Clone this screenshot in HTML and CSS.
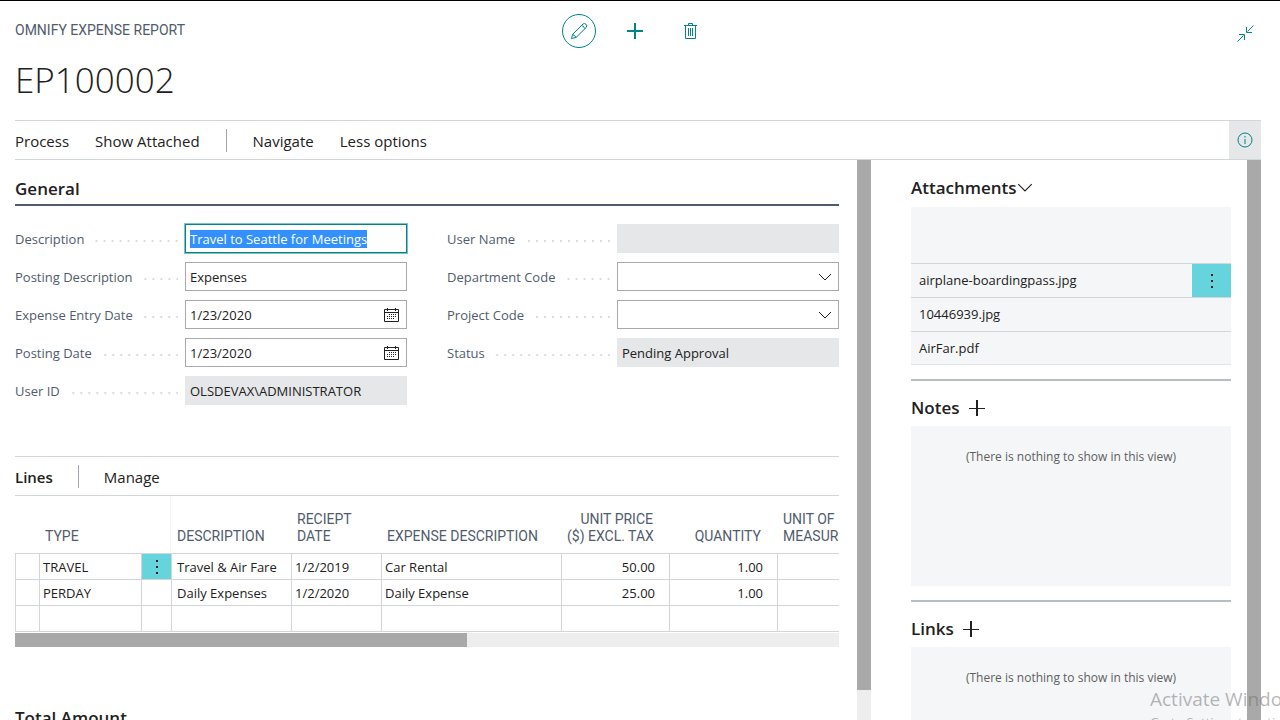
FILE: index.html
```html
<!DOCTYPE html>
<html lang="en">
<head>
<meta charset="utf-8">
<title>EP100002 - Omnify Expense Report</title>
<link rel="stylesheet" href="styles.css">
</head>
<body>
<svg class="defs" aria-hidden="true">
  <symbol id="calendar" viewBox="0 0 15 14"><path d="M.5 1.500h14v12H.5zM.5 4.500h14M3.500 0v3M11.500 0v3" fill="none" stroke="currentColor"/><path d="M5 6h1v1H5zM7 6h1v1H7zM9 6h1v1H9zM11 6h1v1h-1zM3 8h1v1H3zM5 8h1v1H5zM7 8h1v1H7zM9 8h1v1H9zM11 8h1v1h-1zM3 10h1v1H3zM5 10h1v1H5zM7 10h1v1H7zM9 10h1v1H9z" fill="currentColor"/></symbol>
  <symbol id="chevron" viewBox="0 0 14 8"><path d="M1 1l6 6 6-6" fill="none" stroke="currentColor"/></symbol>
  <symbol id="add" viewBox="0 0 16 16"><path d="M0 8.500h16" fill="none" stroke="currentColor"/><path d="M8 0v16" fill="none" stroke="currentColor" stroke-width="2"/></symbol>
  <symbol id="dots" viewBox="0 0 2 14"><path d="M0 0h2v2H0zM0 6h2v2H0zM0 12h2v2H0z" fill="currentColor"/></symbol>
</svg>
<header class="header">
  <div class="heading">
    <p class="caption">OMNIFY EXPENSE REPORT</p>
    <h1 class="title">EP100002</h1>
  </div>
  <div class="tools">
    <button class="tool tool-edit" aria-label="Edit"><svg width="18" height="18" viewBox="0 0 18 18" fill="none" stroke="currentColor"><path d="M1.500 16.500l1-4L13 2q1.500-1 3 .3t.2 3.200L6 15.500zM2.500 12.500q2.500.5 3.500 3M11.500 3.500q2.500.5 3 3"/></svg></button>
    <button class="tool" aria-label="New"><svg width="16" height="16" viewBox="0 0 16 16" fill="none" stroke="currentColor" stroke-width="2"><path d="M8 0v16M0 8h16"/></svg></button>
    <button class="tool" aria-label="Delete"><svg width="13" height="17" viewBox="0 0 13 17" fill="none" stroke="currentColor"><path d="M0 2.500h13M4.500 2V.5h4V2M1.500 3v12.500h10V3M4.500 5v8M6.500 5v8M8.500 5v8"/></svg></button>
  </div>
  <button class="tool collapse" aria-label="Collapse"><svg width="17" height="17" viewBox="0 0 17 17" fill="none" stroke="currentColor"><path d="M16.500.5l-6 6M9.500 2v5.500H15M.5 16.500l6-6M2 9.500h5.500V15"/></svg></button>
</header>
<nav class="actionbar">
  <div class="actions">
    <button class="action">Process</button>
    <button class="action">Show Attached</button>
    <span class="divider"></span>
    <button class="action">Navigate</button>
    <button class="action">Less options</button>
  </div>
  <button class="info" aria-label="Toggle details"><svg width="16" height="16" viewBox="0 0 16 16" fill="none" stroke="currentColor"><circle cx="8" cy="8" r="7"/><path d="M8 7v5M8 4v1.500" /></svg></button>
</nav>
<div class="content">
  <main class="main">
    <section class="general">
      <h2 class="section-title">General</h2>
      <div class="fields">
        <div class="column">
          <div class="field"><label class="label" for="desc">Description</label><span class="leader"></span><div class="control"><input class="box focused" id="desc" value="Travel to Seattle for Meetings"></div></div>
          <div class="field"><label class="label" for="pdesc">Posting Description</label><span class="leader"></span><div class="control"><input class="box" id="pdesc" value="Expenses"></div></div>
          <div class="field"><label class="label" for="edate">Expense Entry Date</label><span class="leader"></span><div class="control"><input class="box" id="edate" value="1/23/2020"><button class="picker" aria-label="Choose entry date"><svg width="15" height="14"><use href="#calendar"/></svg></button></div></div>
          <div class="field"><label class="label" for="pdate">Posting Date</label><span class="leader"></span><div class="control"><input class="box" id="pdate" value="1/23/2020"><button class="picker" aria-label="Choose posting date"><svg width="15" height="14"><use href="#calendar"/></svg></button></div></div>
          <div class="field"><label class="label" for="uid">User ID</label><span class="leader"></span><div class="control"><input class="box readonly" id="uid" value="OLSDEVAX\ADMINISTRATOR" readonly></div></div>
        </div>
        <div class="column">
          <div class="field"><label class="label" for="uname">User Name</label><span class="leader"></span><div class="control"><input class="box readonly" id="uname" readonly></div></div>
          <div class="field"><label class="label" for="dept">Department Code</label><span class="leader"></span><div class="control"><select class="box" id="dept"><option></option></select><svg class="arrow" width="14" height="8"><use href="#chevron"/></svg></div></div>
          <div class="field"><label class="label" for="proj">Project Code</label><span class="leader"></span><div class="control"><select class="box" id="proj"><option></option></select><svg class="arrow" width="14" height="8"><use href="#chevron"/></svg></div></div>
          <div class="field"><label class="label" for="status">Status</label><span class="leader"></span><div class="control"><input class="box readonly" id="status" value="Pending Approval" readonly></div></div>
        </div>
      </div>
    </section>
    <section class="lines">
      <div class="lines-bar">
        <h2 class="lines-title">Lines</h2>
        <span class="divider"></span>
        <button class="action">Manage</button>
      </div>
      <div class="table-wrap">
        <table class="table">
          <colgroup><col class="w-mark"><col class="w-type"><col class="w-menu"><col class="w-desc"><col class="w-date"><col class="w-exp"><col class="w-num"><col class="w-num"><col class="w-desc"></colgroup>
          <thead><tr><th></th><th>TYPE</th><th></th><th class="first">DESCRIPTION</th><th>RECIEPT<br>DATE</th><th>EXPENSE DESCRIPTION</th><th class="num">UNIT PRICE<br>($) EXCL. TAX</th><th class="num">QUANTITY</th><th>UNIT OF<br>MEASURE</th></tr></thead>
          <tbody>
            <tr><td></td><td>TRAVEL</td><td class="menu-cell"><button class="row-menu" aria-label="Row options"><svg width="2" height="14"><use href="#dots"/></svg></button></td><td class="wide">Travel &amp; Air Fare</td><td>1/2/2019</td><td>Car Rental</td><td class="num">50.00</td><td class="num">1.00</td><td></td></tr>
            <tr><td></td><td>PERDAY</td><td></td><td class="wide">Daily Expenses</td><td>1/2/2020</td><td>Daily Expense</td><td class="num">25.00</td><td class="num">1.00</td><td></td></tr>
            <tr><td></td><td></td><td></td><td></td><td></td><td></td><td></td><td></td><td></td></tr>
          </tbody>
        </table>
      </div>
      <div class="hscroll"><div class="hthumb"></div></div>
    </section>
    <h2 class="section-title total">Total Amount</h2>
  </main>
  <div class="vscroll"><div class="vthumb"></div></div>
  <aside class="side">
    <section class="part">
      <h2 class="part-title">Attachments<svg width="16" height="9" viewBox="0 0 14 8"><use href="#chevron"/></svg></h2>
      <ul class="files">
        <li class="file"><a class="file-link" href="#">airplane-boardingpass.jpg</a><button class="file-menu" aria-label="File options"><svg width="2" height="14"><use href="#dots"/></svg></button></li>
        <li class="file"><a class="file-link" href="#">10446939.jpg</a></li>
        <li class="file"><a class="file-link" href="#">AirFar.pdf</a></li>
      </ul>
    </section>
    <section class="part ruled">
      <h2 class="part-title spaced">Notes<button class="add" aria-label="Add note"><svg width="16" height="16"><use href="#add"/></svg></button></h2>
      <p class="empty">(There is nothing to show in this view)</p>
    </section>
    <section class="part ruled">
      <h2 class="part-title spaced">Links<button class="add" aria-label="Add link"><svg width="16" height="16"><use href="#add"/></svg></button></h2>
      <p class="empty">(There is nothing to show in this view)</p>
    </section>
  </aside>
  <div class="vscroll"><div class="vthumb full"></div></div>
</div>
<div class="watermark"><p class="mark-title">Activate Windows</p><p class="mark-text">Go to Settings to activate Windows.</p></div>
<script src="script.js"></script>
</body>
</html>
```
FILE: script.js
```js
const description = document.getElementById('desc');
description.focus();
description.select();
```
FILE: styles.css
```css
* { box-sizing: border-box; }
body {
  margin: 0;
  height: 100vh;
  overflow: hidden;
  display: flex;
  flex-direction: column;
  position: relative;
  border-top: 1px solid #000;
  background: #fff;
  color: #212121;
  font: 13px/18px "Open Sans", "Noto Sans", sans-serif;
}
h1, h2, p, ul { margin: 0; padding: 0; }
button { border: 0; padding: 0; background: none; color: inherit; font: inherit; }
svg { display: block; }
.defs { position: absolute; width: 0; height: 0; }

.header {
  flex: none;
  display: grid;
  grid-template-columns: 1fr auto 1fr;
  align-items: start;
  height: 119px;
  padding: 13px 26px 0 15px;
}
.caption { padding-top: 7px; color: #505c6d; font: 400 14px/18px Roboto, sans-serif; }
.title { margin-top: 16px; font-size: 35px; font-weight: 300; line-height: 50px; }
.tools { display: flex; align-items: center; gap: 22px; color: #00838a; }
.tool { display: flex; align-items: center; justify-content: center; width: 34px; height: 34px; color: #00838a; }
.tool-edit { border: 1px solid #00838a; border-radius: 50%; }
.collapse { justify-self: end; width: 17px; height: 39px; }

.actionbar {
  flex: none;
  display: flex;
  justify-content: space-between;
  height: 40px;
  margin: 0 19px 0 15px;
  border-top: 1px solid #d3d6d9;
  border-bottom: 1px solid #d3d6d9;
}
.actions { display: flex; align-items: center; gap: 26px; }
.action { padding-top: 2px; font-size: 15px; line-height: 20px; }
.divider { width: 1px; height: 23px; background: #a0a7b2; }
.info { display: flex; align-items: center; justify-content: center; width: 32px; background: #e5e7e9; color: #00838a; }

.content { flex: 1; min-height: 0; display: flex; padding-right: 19px; }
.main { flex: 1; min-width: 0; overflow: hidden; padding: 0 18px 0 15px; }
.vscroll { flex: none; width: 14px; background: #eee; }
.vthumb { height: 530px; background: #a9a9a9; }
.full { height: 100%; }

.section-title { font-size: 17px; font-weight: 600; line-height: 24px; }
.general .section-title { padding: 17px 0 3px; border-bottom: 2px solid #505c6d; }
.fields { display: grid; grid-template-columns: 1fr 1fr; gap: 40px; padding-top: 18px; }
.column { display: flex; flex-direction: column; gap: 9px; }
.field { display: grid; grid-template-columns: auto 1fr 222px; align-items: center; }
.label { color: #505c6d; }
.leader {
  height: 2px;
  margin: 4px 7px 0 10px;
  background: linear-gradient(to left, #dcdcdc 2px, transparent 2px) right top / 8px 2px repeat-x;
}
.control { position: relative; height: 29px; }
.box {
  display: block;
  width: 100%;
  height: 29px;
  margin: 0;
  padding: 0 4px;
  border: 1px solid #a9a9a9;
  border-radius: 0;
  outline: 0;
  background: #fff;
  color: #212121;
  font: inherit;
  appearance: none;
}
.focused { border-color: #00838a; box-shadow: 0 0 0 1px #80c1c4; }
.box::selection { background: #3390ff; color: #fff; }
.readonly { border-color: #e5e7e9; background: #e5e7e9; }
.picker { position: absolute; right: 8px; top: 8px; }
.arrow { position: absolute; right: 7px; top: 11px; pointer-events: none; }

.lines { margin-top: 51px; }
.lines-bar {
  display: flex;
  align-items: center;
  gap: 25px;
  height: 40px;
  border-top: 1px solid #d3d6d9;
  border-bottom: 1px solid #d3d6d9;
}
.lines-title { padding-top: 2px; font-size: 15px; font-weight: 600; line-height: 20px; }
.table-wrap { overflow: hidden; }
.table { width: 882px; table-layout: fixed; border-collapse: separate; border-spacing: 0; border-bottom: 1px solid #d3d6d9; }
.w-mark { width: 24px; }
.w-type { width: 102px; }
.w-menu { width: 30px; }
.w-desc { width: 120px; }
.w-date { width: 90px; }
.w-exp { width: 180px; }
.w-num { width: 108px; }
.table th {
  height: 57px;
  padding: 0 6px 8px;
  vertical-align: bottom;
  text-align: left;
  white-space: nowrap;
  color: #505c6d;
  font: 400 14px/17px Roboto, sans-serif;
}
.table .first { box-shadow: -1px 0 #f3f4f5; }
.table td { height: 26px; padding: 0 3px; border-top: 1px solid #d3d6d9; border-left: 1px solid #d3d6d9; white-space: nowrap; }
.table .wide { padding-left: 5px; }
.table th.num { padding-right: 16px; text-align: right; }
.table td.num { padding-right: 14px; text-align: right; }
.table .menu-cell { padding: 0; }
.row-menu { display: flex; align-items: center; justify-content: center; width: 100%; height: 25px; background: #66d4dc; }
.hscroll { height: 14px; margin-top: 1px; background: #eee; }
.hthumb { width: 452px; height: 14px; background: #a9a9a9; }
.total { margin-top: 59px; }

.side { flex: none; width: 376px; overflow: hidden; padding: 13px 16px 0 40px; }
.part-title { display: flex; align-items: center; height: 29px; font-size: 17px; font-weight: 600; }
.spaced { gap: 9px; height: 45px; padding-top: 9px; }
.files { margin-top: 5px; padding-top: 56px; list-style: none; background: #f5f6f8; border-bottom: 1px solid #e0e2e4; }
.file { display: flex; height: 34px; border-top: 1px solid #d3d6d9; }
.file:last-child { height: 33px; }
.file-link { flex: 1; padding: 7px 8px; color: inherit; line-height: 18px; text-decoration: none; }
.file-menu { display: flex; align-items: center; justify-content: center; width: 39px; background: #66d4dc; }
.ruled { margin-top: 14px; border-top: 2px solid #b8bdc2; }
.empty { height: 160px; padding-top: 22px; background: #f5f6f8; color: #606060; font-size: 12px; text-align: center; }

.watermark { position: absolute; left: calc(100% - 130px); right: 0; bottom: -12px; overflow: hidden; color: rgba(110, 110, 110, 0.5); white-space: nowrap; }
.mark-title { font-size: 19px; line-height: 26px; }
.mark-text { font-size: 13px; line-height: 20px; }
```
